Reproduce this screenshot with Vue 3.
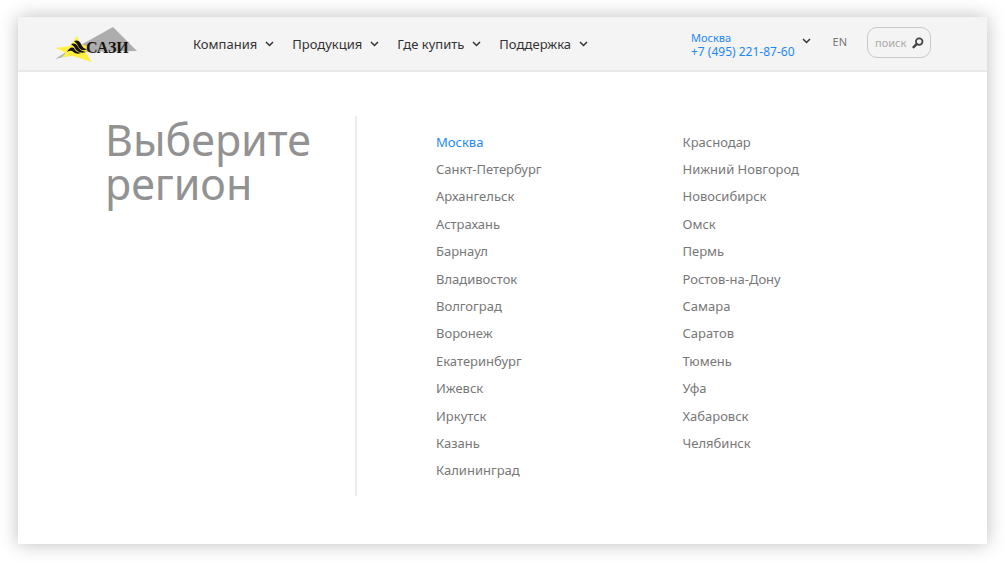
<script setup>
import { ref } from 'vue'

const menu = ['Компания', 'Продукция', 'Где купить', 'Поддержка']
const columns = [
  ['Москва', 'Санкт-Петербург', 'Архангельск', 'Астрахань', 'Барнаул', 'Владивосток', 'Волгоград', 'Воронеж', 'Екатеринбург', 'Ижевск', 'Иркутск', 'Казань', 'Калининград'],
  ['Краснодар', 'Нижний Новгород', 'Новосибирск', 'Омск', 'Пермь', 'Ростов-на-Дону', 'Самара', 'Саратов', 'Тюмень', 'Уфа', 'Хабаровск', 'Челябинск'],
]
const selected = ref('Москва')
const query = ref('')
</script>

<template>
  <div class="page">
    <header class="header">
      <a class="logo" href="#" aria-label="САЗИ">
        <svg width="84" height="40" viewBox="0 0 84 40">
          <path d="M24 22L58 3L82 27L30 28Z" fill="#adadad" />
          <path d="M0 35L11 28L17 31Z" fill="#b5b5b5" />
          <path d="M1 24L15 22L22 12L25 20L32 22L31 29L37 38L18 32L7 33L11 29Z" fill="#fff042" />
          <g fill="#17140f">
            <path d="M19 17Q24 15 26 20Q28 25 32 25Q28 28 24 24Q22 19 19 17Z" />
            <path d="M16 20Q21 18 23 23Q25 27 31 28Q25 30 21 26Q19 22 16 20Z" />
            <path d="M12 28Q15 22 19 24Q20 28 26 29Q21 31 17 27Q15 26 12 28Z" />
          </g>
          <text x="31" y="29" class="logo-text">САЗИ</text>
        </svg>
      </a>
      <nav class="menu">
        <button v-for="item in menu" :key="item" type="button" class="menu-item">
          {{ item }}
          <svg class="chevron" width="9" height="6" viewBox="0 0 9 6"><path d="M1 1L4.5 4.5L8 1" /></svg>
        </button>
      </nav>
      <div class="contact">
        <div class="contact-lines">
          <a href="#" class="city">{{ selected }}</a>
          <a href="tel:+74952218760">+7 (495) 221-87-60</a>
        </div>
        <button type="button" class="city-toggle" aria-label="Выбрать регион">
          <svg class="chevron" width="9" height="6" viewBox="0 0 9 6"><path d="M1 1L4.5 4.5L8 1" /></svg>
        </button>
      </div>
      <a class="lang" href="#">EN</a>
      <form class="search" role="search" @submit.prevent>
        <input v-model="query" type="text" placeholder="поиск" aria-label="поиск" />
        <button type="submit" aria-label="Найти">
          <svg width="12" height="12" viewBox="0 0 12 12">
            <circle cx="7.2" cy="4.6" r="3.3" fill="none" stroke="#444" stroke-width="1.8" />
            <path d="M4.6 7.2L1.6 10.2" stroke="#444" stroke-width="2.4" stroke-linecap="round" />
          </svg>
        </button>
      </form>
    </header>
    <main class="content">
      <h1 class="title">Выберите регион</h1>
      <div class="regions">
        <ul v-for="(cities, i) in columns" :key="i" class="cities">
          <li v-for="city in cities" :key="city">
            <a href="#" :class="{ active: city === selected }" @click.prevent="selected = city">{{ city }}</a>
          </li>
        </ul>
      </div>
    </main>
  </div>
</template>

<style>
body {
  margin: 0;
  background: #fff;
}
</style>

<style scoped>
.page {
  display: flex;
  flex-direction: column;
  box-sizing: border-box;
  min-height: calc(100vh - 36px);
  margin: 17px 18px 19px;
  background: #fff;
  box-shadow: 0 0 18px rgba(0, 0, 0, 0.26);
  font-family: "Noto Sans", "Open Sans", sans-serif;
}
a {
  color: inherit;
  text-decoration: none;
}
button {
  padding: 0;
  border: 0;
  background: none;
  color: inherit;
  font: inherit;
  cursor: pointer;
}
.header {
  display: flex;
  align-items: center;
  box-sizing: border-box;
  height: 55px;
  padding: 0 56px 0 37px;
  border-bottom: 2px solid #e8e8e8;
  background: #f4f4f4;
}
.logo,
.logo svg {
  display: block;
}
.logo-text {
  fill: #17140f;
  font: bold 16px "Liberation Serif", serif;
}
.menu {
  display: flex;
  gap: 18px;
  margin-left: 54px;
  color: #333;
  font-size: 13px;
}
.menu-item {
  display: flex;
  align-items: center;
  gap: 8px;
  line-height: 20px;
  white-space: nowrap;
}
.chevron {
  flex: none;
  fill: none;
  stroke: #333;
  stroke-width: 1.5;
}
.contact {
  display: flex;
  gap: 7px;
  margin-left: auto;
  padding-top: 2px;
  color: #1e88f7;
  font-size: 12px;
  line-height: 14px;
}
.contact-lines {
  display: flex;
  flex-direction: column;
  white-space: nowrap;
}
.city {
  font-size: 11px;
}
.city-toggle {
  display: flex;
  align-items: center;
  height: 20px;
}
.lang {
  margin: 0 20px 4px 22px;
  color: #777;
  font-size: 11px;
}
.search {
  display: flex;
  align-items: center;
  box-sizing: border-box;
  width: 64px;
  height: 31px;
  margin-bottom: 2px;
  padding: 0 6px 0 7px;
  border: 1px solid #c8c8c8;
  border-radius: 10px;
}
.search input {
  flex: 1;
  min-width: 0;
  padding: 0;
  border: 0;
  outline: 0;
  background: none;
  color: #555;
  font: 11px "Noto Sans", sans-serif;
}
.search input::placeholder {
  color: #aaa;
  opacity: 1;
}
.search button,
.search svg {
  display: block;
}
.content {
  display: flex;
  flex: 1;
  padding: 44px 56px 48px 87px;
}
.title {
  box-sizing: border-box;
  width: 252px;
  margin: 0;
  padding-top: 2px;
  border-right: 2px solid #ececec;
  color: #929292;
  font-size: 43px;
  font-weight: 400;
  line-height: 44px;
}
.regions {
  display: grid;
  flex: 1;
  grid-template-columns: 1fr 1fr;
  padding: 12px 2px 12px 79px;
}
.cities {
  display: grid;
  grid-template-rows: repeat(13, 1fr);
  margin: 0;
  padding: 0;
  list-style: none;
  color: #777;
  font-size: 13px;
}
.cities li {
  display: flex;
  align-items: center;
}
.cities .active {
  color: #1e88f7;
}
</style>
